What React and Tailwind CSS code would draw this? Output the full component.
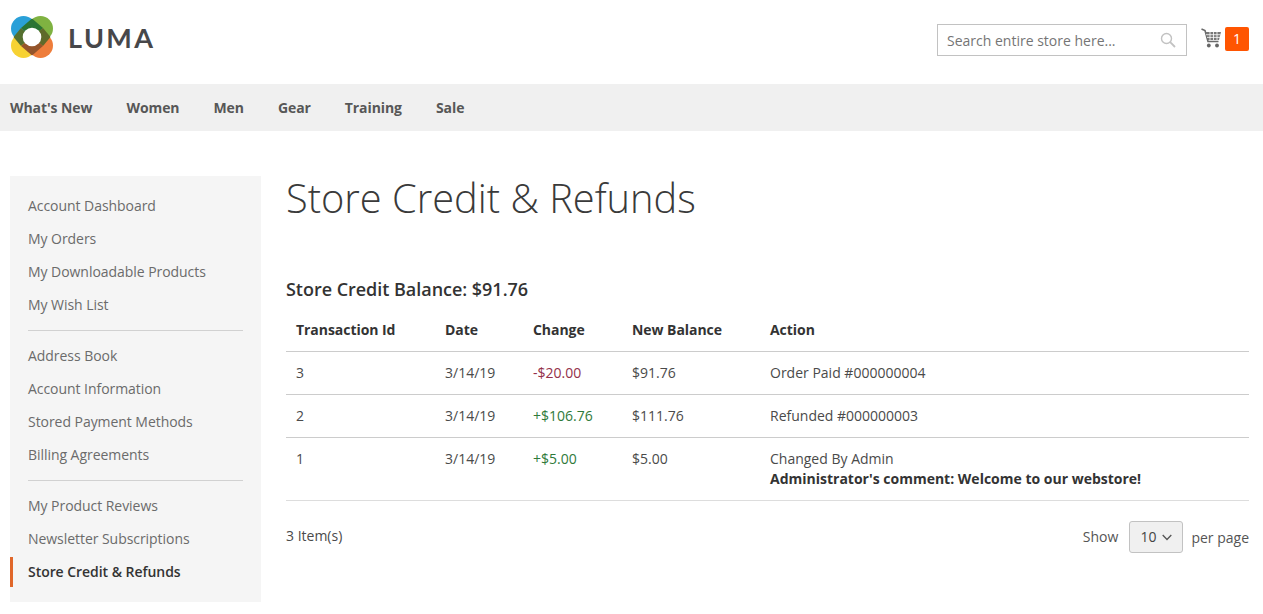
const F = { fontFamily: '"Open Sans", sans-serif' };

function Logo() {
  return (
    <div className="flex items-center">
      <svg width="44" height="44" viewBox="-22 -22 44 44" className="shrink-0">
        <circle cx="-8.5" cy="-8.5" r="12.5" fill="#2aa0d8" />
        <circle cx="8.5" cy="-8.5" r="12.5" fill="#7fb241" />
        <circle cx="-8.5" cy="8.5" r="12.5" fill="#f7d233" />
        <circle cx="8.5" cy="8.5" r="12.5" fill="#ee7d3b" />
        <path d="M0 -18.5 L11 -9 L0 0 L-11 -9 Z" fill="#2a7434" />
        <path d="M-18.5 0 L-11 -9 L0 0 L-11 9 Z" fill="#55702f" />
        <path d="M18.5 0 L11 -9 L0 0 L11 9 Z" fill="#5f6a2a" />
        <path d="M0 18.5 L-11 9 L0 0 L11 9 Z" fill="#94552b" />
        <circle cx="0" cy="0" r="9.3" fill="#fff" />
      </svg>
      <span className="ml-[14px] text-[27px] leading-none tracking-[2.4px] font-bold text-[#47474a]" style={{ fontFamily: '"Lato", sans-serif' }}>LUMA</span>
    </div>
  );
}

function Cart() {
  return (
    <svg width="20" height="20" viewBox="0 0 20 20" className="shrink-0">
      <path d="M0.5 1 L4 2.5 L7 13.5 H17.5" fill="none" stroke="#6a6a6a" strokeWidth="1.6" />
      <path d="M4.5 4 H20 L18 12 H6.8 Z" fill="#777" />
      <path d="M5 6.7 H19.5 M6 9.4 H19 M9 4 V12 M12.5 4 V12 M16 4 V12" stroke="#fff" strokeWidth="0.8" />
      <circle cx="7.8" cy="17.5" r="1.9" fill="#666" />
      <circle cx="16" cy="17.5" r="1.9" fill="#666" />
    </svg>
  );
}

const groups = [
  ["Account Dashboard", "My Orders", "My Downloadable Products", "My Wish List"],
  ["Address Book", "Account Information", "Stored Payment Methods", "Billing Agreements"],
  ["My Product Reviews", "Newsletter Subscriptions", "Store Credit & Refunds"],
];

function Sidebar() {
  return (
    <aside className="w-[251px] shrink-0 h-[426px] bg-[#f5f5f5] pt-[13px] text-sm tracking-[-0.05px]">
      {groups.map((g, i) => (
        <div key={i}>
          {i > 0 && <div className="mx-[18px] mt-[9px] mb-[8px] h-px bg-[#d1d1d1]" />}
          {g.map((t) => {
            const active = t === "Store Credit & Refunds";
            return (
              <div key={t} className={"h-[33px] leading-[33px] pl-[18px] " + (active ? "text-[#333] font-semibold relative" : "text-[#6b6b6b]")}>
                {active && <span className="absolute left-0 top-[2px] bottom-[1px] w-[3px] bg-[#e0672a]" />}
                {t}
              </div>
            );
          })}
        </div>
      ))}
    </aside>
  );
}

const rows = [
  { id: "3", date: "3/14/19", change: "-$20.00", color: "text-[#93304a]", bal: "$91.76", action: "Order Paid #000000004" },
  { id: "2", date: "3/14/19", change: "+$106.76", color: "text-[#2f7a3a]", bal: "$111.76", action: "Refunded #000000003" },
  { id: "1", date: "3/14/19", change: "+$5.00", color: "text-[#2f7a3a]", bal: "$5.00", action: "Changed By Admin", note: "Administrator's comment: Welcome to our webstore!" },
];

const Row = ({ a, b, c, d, e, className }) => (
  <div className={"grid grid-cols-[149px_88px_99px_138px_1fr] px-[10px] " + className}>
    <div>{a}</div><div>{b}</div><div>{c}</div><div>{d}</div><div>{e}</div>
  </div>
);

export default function App() {
  return (
    <div className="w-[1263px] h-[614px] bg-white text-sm text-[#333] overflow-hidden" style={F}>
      <header className="h-[84px] flex justify-between pl-[10px] pr-[14px]">
        <div className="pt-[15px]"><Logo /></div>
        <div className="flex pt-[24px] items-start">
          <div className="w-[250px] h-[32px] border border-[#c2c2c2] flex items-center justify-between pl-[9px] pr-[10px] text-[#757575]">
            <span className="pt-[1px]">Search entire store here...</span>
            <svg width="16" height="16" viewBox="0 0 16 16" fill="none" stroke="#c2c2c2" strokeWidth="1.4"><circle cx="6.5" cy="6.5" r="5" /><path d="M10.2 10.2 L15 15" strokeWidth="1.8" /></svg>
          </div>
          <div className="flex items-start ml-[14px] mt-[3px]">
            <div className="mt-[1px]"><Cart /></div>
            <span className="ml-[4px] w-[24px] h-[24px] rounded-[2px] bg-[#ff5501] text-white text-sm leading-[24px] text-center">1</span>
          </div>
        </div>
      </header>
      <nav className="h-[47px] bg-[#f0f0f0] flex items-center gap-[34px] pl-[10px] font-bold text-[#575757] tracking-[-0.08px]">
        {["What's New", "Women", "Men", "Gear", "Training", "Sale"].map((t) => <span key={t}>{t}</span>)}
      </nav>
      <div className="flex pt-[45px] pl-[10px] pr-[14px]">
        <Sidebar />
        <main className="ml-[25px] flex-1 min-w-0">
          <h1 className="text-[39.8px] font-light leading-[44px] text-[#3a3a3a]">Store Credit &amp; Refunds</h1>
          <div className="mt-[57px] text-lg font-semibold leading-[25px] tracking-[-0.03px]">Store Credit Balance: $91.76</div>
          <Row className="mt-[6px] h-[44px] items-center font-bold border-b border-[#ccc] tracking-[-0.05px]" a="Transaction Id" b="Date" c="Change" d="New Balance" e="Action" />
          {rows.map((r) => (
            <Row key={r.id}
              className={"pt-[11px] leading-5 text-[#4a4a4a] border-b " + (r.note ? "h-[63px] border-[#ddd]" : "h-[43px] border-[#ccc]")}
              a={r.id}
              b={r.date}
              c={<span className={r.color}>{r.change}</span>}
              d={r.bal}
              e={<>{r.action}{r.note && <div className="font-bold text-[#333] whitespace-nowrap">{r.note}</div>}</>}
            />
          ))}
          <div className="flex justify-between items-center mt-[20px] h-[32px]">
            <span className="text-[#4a4a4a] mb-[2px]">3 Item(s)</span>
            <div className="flex items-center text-[#555]">
              <span>Show</span>
              <div className="ml-[11px] w-[54px] h-[32px] bg-[#f0f0f0] border border-[#c2c2c2] rounded-[3px] flex items-center pl-[10px] gap-[6px] text-[#444]">
                <span>10</span>
                <svg width="10" height="7" viewBox="0 0 10 7" fill="none" stroke="#555" strokeWidth="1.3"><path d="M0.7 1 L5 5.5 L9.3 1" /></svg>
              </div>
              <span className="ml-[8px] pt-[1px]">per page</span>
            </div>
          </div>
        </main>
      </div>
    </div>
  );
}
